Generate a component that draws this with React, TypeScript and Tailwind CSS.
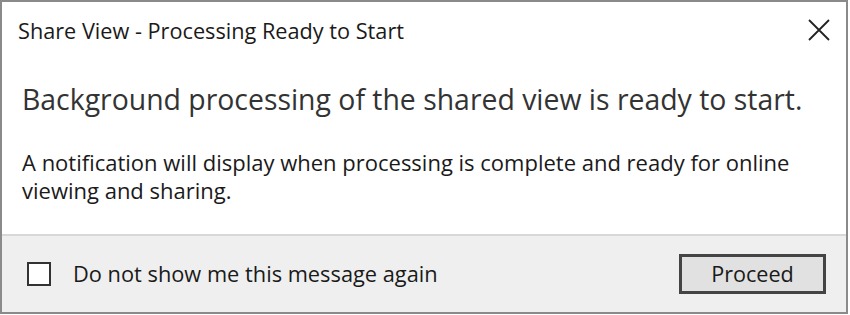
export default function App() {
  return (
    <div
      className="w-[850px] h-[315px] bg-white overflow-hidden"
      style={{ fontFamily: '"Segoe UI", "Open Sans", "Noto Sans", sans-serif' }}
    >
      <div className="flex h-[314px] w-[848px] flex-col border-2 border-[#8a8a8a] bg-white">
        {/* title bar */}
        <div className="flex h-[58px] items-center justify-between pl-[16px] pr-[16px]">
          <span className="text-[21.7px] text-[#1a1a1a]">Share View - Processing Ready to Start</span>
          <svg width="22" height="22" viewBox="0 0 22 22" className="-mt-[2px] text-[#222]">
            <path d="M1 1 L21 21 M21 1 L1 21" stroke="currentColor" strokeWidth="1.8" />
          </svg>
        </div>

        {/* body */}
        <div className="flex-1 pl-[20px] pr-[30px]">
          <h1 className="mt-[21px] text-[28.4px] leading-[36px] text-[#333]">
            Background processing of the shared view is ready to start.
          </h1>
          <p className="mt-[31px] text-[22px] leading-[28px] text-[#1a1a1a]">
            A notification will display when processing is complete and ready for online viewing and sharing.
          </p>
        </div>

        {/* footer */}
        <div className="flex h-[78px] items-center justify-between border-t-2 border-[#d8d8d8] bg-[#efefef] pl-[25px] pr-[20px]">
          <label className="flex items-center gap-[22px]">
            <span className="h-[24px] w-[24px] border-2 border-[#333] bg-white" />
            <span className="text-[21.8px] text-[#1a1a1a]">Do not show me this message again</span>
          </label>
          <button className="h-[40px] w-[147px] border-[3px] border-[#444] bg-[#e1e1e1] text-[21.6px] text-[#1a1a1a]">
            Proceed
          </button>
        </div>
      </div>
    </div>
  );
}
